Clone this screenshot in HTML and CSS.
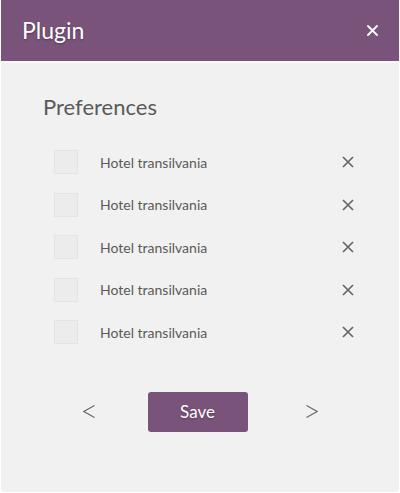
FILE: index.html
```html
<!DOCTYPE html>
<html>
<head>
<meta charset="utf-8">
<link rel="stylesheet" href="styles.css">
</head>
<body>
<div class="card">
  <div class="header">
    <span class="title">Plugin</span>
    <svg class="close" width="11" height="11" viewBox="0 0 11 11"><path d="M1 1L10 10M10 1L1 10" stroke="#fff" stroke-width="1.8" stroke-linecap="round"/></svg>
  </div>
  <div class="content">
    <h2 class="heading">Preferences</h2>
    <ul class="list">
      <li class="row"><span class="box"></span><span class="label">Hotel transilvania</span><svg class="remove" width="12" height="12" viewBox="0 0 12 12"><path d="M1 1L11 11M11 1L1 11" stroke="#666" stroke-width="1.7"/></svg></li>
      <li class="row"><span class="box"></span><span class="label">Hotel transilvania</span><svg class="remove" width="12" height="12" viewBox="0 0 12 12"><path d="M1 1L11 11M11 1L1 11" stroke="#666" stroke-width="1.7"/></svg></li>
      <li class="row"><span class="box"></span><span class="label">Hotel transilvania</span><svg class="remove" width="12" height="12" viewBox="0 0 12 12"><path d="M1 1L11 11M11 1L1 11" stroke="#666" stroke-width="1.7"/></svg></li>
      <li class="row"><span class="box"></span><span class="label">Hotel transilvania</span><svg class="remove" width="12" height="12" viewBox="0 0 12 12"><path d="M1 1L11 11M11 1L1 11" stroke="#666" stroke-width="1.7"/></svg></li>
      <li class="row"><span class="box"></span><span class="label">Hotel transilvania</span><svg class="remove" width="12" height="12" viewBox="0 0 12 12"><path d="M1 1L11 11M11 1L1 11" stroke="#666" stroke-width="1.7"/></svg></li>
    </ul>
    <div class="footer">
      <svg class="prev" width="12" height="13" viewBox="0 0 12 13"><polyline points="11.5,0.5 0.8,6.5 11.5,12.5" fill="none" stroke="#666" stroke-width="1.1"/></svg>
      <button class="save">Save</button>
      <svg class="next" width="12" height="13" viewBox="0 0 12 13"><polyline points="0.5,0.5 11.2,6.5 0.5,12.5" fill="none" stroke="#666" stroke-width="1.1"/></svg>
    </div>
  </div>
</div>
</body>
</html>
```
FILE: styles.css
```css
html, body {
  margin: 0;
  padding: 0;
  background: #ffffff;
}
body {
  font-family: Lato, "Open Sans", sans-serif;
}
.card {
  width: 398px;
  height: 492px;
  margin-left: 1px;
  background: #f1f1f1;
  border-radius: 0 0 3px 3px;
  overflow: hidden;
}
.header {
  height: 61px;
  background: #79537a;
  border-bottom: 2px solid #f8f8f8;
  display: flex;
  align-items: center;
  justify-content: space-between;
  padding: 0 21px 0 21px;
}
.title {
  color: #ffffff;
  font-size: 23px;
  line-height: 28px;
  text-shadow: 0 1px 2px rgba(0, 0, 0, 0.35);
  margin-top: -2px;
}
.close {
  display: block;
}
.content {
  padding: 30px 0 0 42px;
}
.heading {
  margin: 0;
  font-weight: normal;
  font-size: 22px;
  line-height: 28px;
  color: #5a5a5a;
}
.list {
  list-style: none;
  margin: 20px 0 0 0;
  padding: 0;
}
.row {
  height: 42.5px;
  display: flex;
  align-items: center;
  padding-left: 11px;
  padding-right: 45px;
}
.box {
  width: 22px;
  height: 22px;
  border: 1px solid #e4e4e4;
  background: #ececec;
}
.label {
  margin-left: 22px;
  font-size: 14px;
  color: #5a5a5a;
}
.remove {
  margin-left: auto;
  display: block;
}
.footer {
  margin: 38px 0 0 -42px;
  display: flex;
  align-items: center;
  justify-content: center;
}
.prev {
  margin-right: 53px;
  display: block;
}
.next {
  margin-left: 58px;
  display: block;
}
.save {
  width: 100px;
  height: 40px;
  border: none;
  border-radius: 3px;
  background: #79537a;
  color: #ffffff;
  font-family: Lato, "Open Sans", sans-serif;
  font-size: 17px;
  text-shadow: 0 1px 2px rgba(0, 0, 0, 0.3);
  padding: 0;
}
```
